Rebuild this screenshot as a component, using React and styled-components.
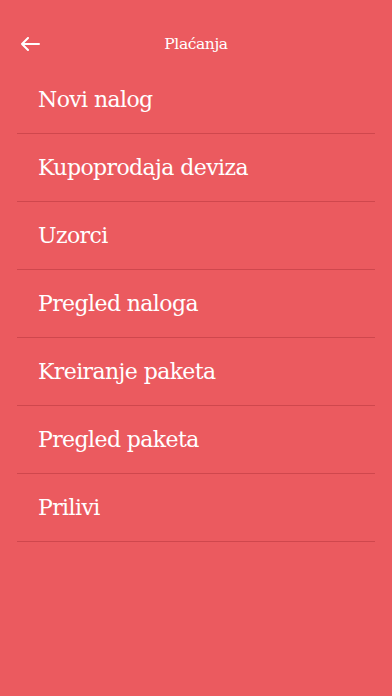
import React from 'react'
import styled, { createGlobalStyle } from 'styled-components'

const GlobalStyle = createGlobalStyle`
	html, body {
		margin: 0;
		padding: 0;
		background: #eb5a5f;
	}
	body {
		font-family: 'DejaVu Serif', 'Liberation Serif', serif;
	}
`

const items = [
	'Novi nalog',
	'Kupoprodaja deviza',
	'Uzorci',
	'Pregled naloga',
	'Kreiranje paketa',
	'Pregled paketa',
	'Prilivi'
]

export default function App() {
	return (
		<>
			<GlobalStyle />
			<Screen>
				<Header>
					<BackButton aria-label="Nazad">
						<svg width="20" height="14" viewBox="0 0 20 14" fill="none">
							<path
								d="M19 7H2M8 1L2 7l6 6"
								stroke="#fff"
								strokeWidth="2"
								strokeLinecap="round"
								strokeLinejoin="round"
							/>
						</svg>
					</BackButton>
					<Title>Plaćanja</Title>
				</Header>
				<Menu>
					{items.map((item) => (
						<MenuItem key={item}>{item}</MenuItem>
					))}
				</Menu>
			</Screen>
		</>
	)
}

const Screen = styled.div`
	width: 392px;
	height: 696px;
	background: #eb5a5f;
	color: #fff;
	padding-top: 22px;
	box-sizing: border-box;
`

const Header = styled.div`
	position: relative;
	height: 44px;
	display: flex;
	align-items: center;
	justify-content: center;
`

const BackButton = styled.button`
	position: absolute;
	left: 10px;
	top: 0;
	height: 44px;
	padding: 0 10px;
	display: flex;
	align-items: center;
	background: none;
	border: 0;
`

const Title = styled.div`
	font-size: 15.5px;
	letter-spacing: -0.4px;
`

const Menu = styled.ul`
	list-style: none;
	margin: 0 17px;
	padding: 0;
`

const MenuItem = styled.li`
	height: 68px;
	display: flex;
	align-items: center;
	padding-left: 21px;
	font-size: 22px;
	letter-spacing: -0.6px;
	border-bottom: 1px solid #cf474d;
	box-sizing: border-box;
`
